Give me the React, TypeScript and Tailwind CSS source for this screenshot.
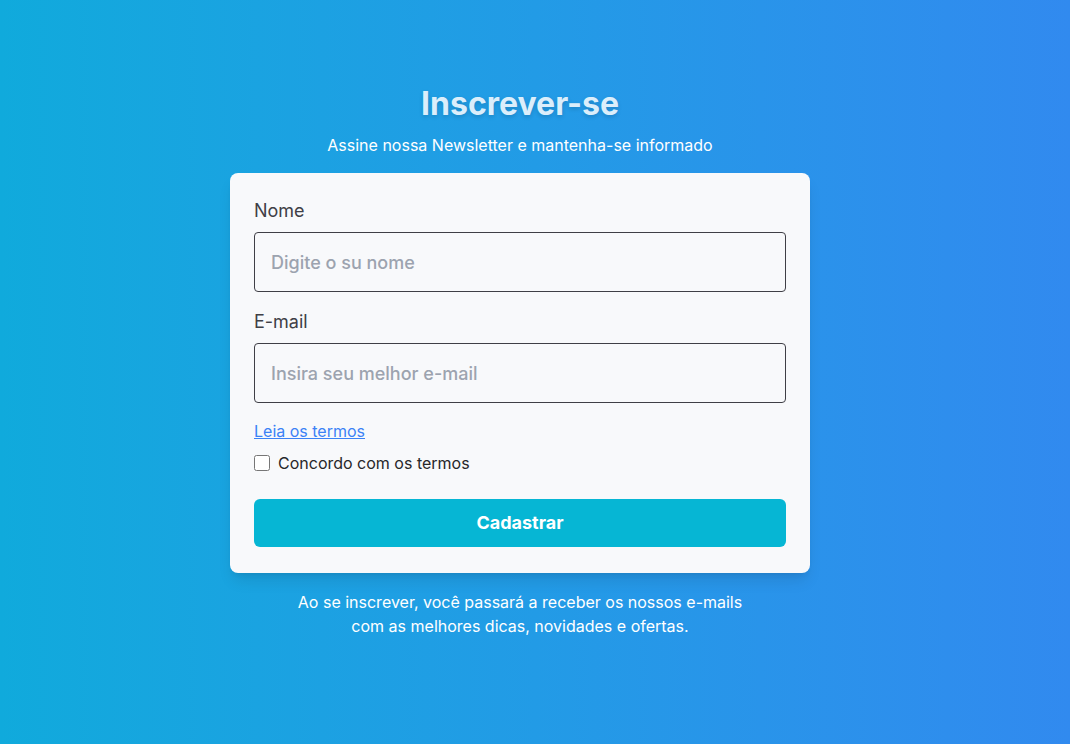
import React, { useState } from 'react';

const App: React.FC = () => {
  const [name, setName] = useState('');
  const [email, setEmail] = useState('');
  const [agree, setAgree] = useState(false);

  return (
    <div
      className="flex min-h-screen flex-col items-center bg-gradient-to-r from-[#10aadc] via-[#229be6] to-[#318aef] pt-[86px] pr-[30px] font-['Inter',sans-serif]"
    >
      <h1 className="text-[32px] font-bold leading-9 text-[#dbeefb] [text-shadow:0_2px_4px_rgba(0,0,0,0.15)]">
        Inscrever-se
      </h1>
      <p className="mt-[11px] text-base leading-6 text-white">
        Assine nossa Newsletter e mantenha-se informado
      </p>

      <form
        className="mt-4 flex w-[580px] flex-col rounded-lg bg-[#f8f9fb] px-6 pt-6 pb-[26px] shadow-lg"
        onSubmit={(e) => e.preventDefault()}
      >
        <label className="text-lg leading-[27px] text-[#3f3f46]">Nome</label>
        <input
          className="mt-2 h-[60px] rounded border border-[#3f3f46] bg-transparent px-4 text-lg font-medium text-gray-700 outline-none placeholder:text-[#9ca3af]"
          placeholder="Digite o su nome"
          value={name}
          onChange={(e) => setName(e.target.value)}
        />

        <label className="mt-4 text-lg leading-[27px] text-[#3f3f46]">E-mail</label>
        <input
          className="mt-2 h-[60px] rounded border border-[#3f3f46] bg-transparent px-4 text-lg font-medium text-gray-700 outline-none placeholder:text-[#9ca3af]"
          placeholder="Insira seu melhor e-mail"
          value={email}
          onChange={(e) => setEmail(e.target.value)}
        />

        <a href="#" className="mt-4 self-start text-base leading-6 text-[#3b82f6] underline">
          Leia os termos
        </a>

        <label className="mt-2 flex items-center gap-2 text-base leading-6 text-[#27272a]">
          <input
            type="checkbox"
            className="h-4 w-4"
            checked={agree}
            onChange={(e) => setAgree(e.target.checked)}
          />
          Concordo com os termos
        </label>

        <button
          type="submit"
          className="mt-6 h-12 rounded-md bg-[#06b6d4] text-lg font-bold text-white"
        >
          Cadastrar
        </button>
      </form>

      <p className="mt-[17px] max-w-[460px] text-center text-base leading-6 text-white">
        Ao se inscrever, você passará a receber os nossos e-mails com as melhores dicas, novidades e ofertas.
      </p>
    </div>
  );
};

export default App;
